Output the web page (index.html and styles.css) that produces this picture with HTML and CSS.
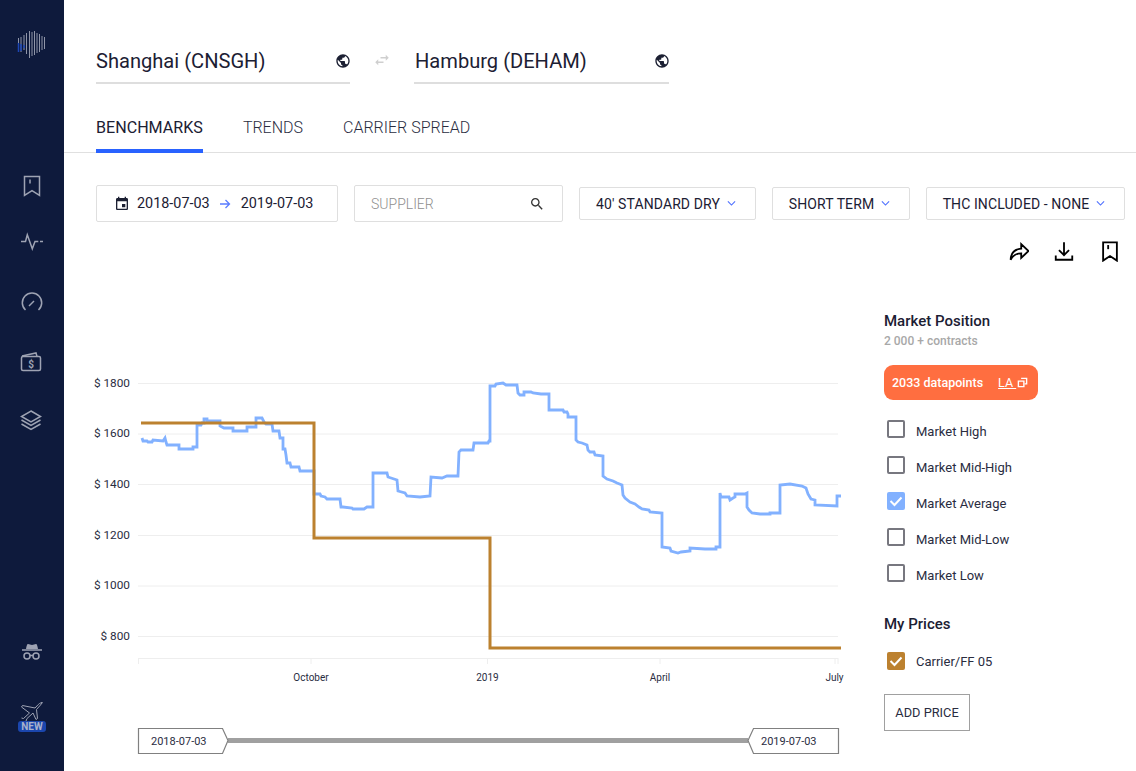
FILE: index.html
```html
<!DOCTYPE html>
<html lang="en">
<head>
<meta charset="utf-8">
<title>Benchmarks</title>
<link rel="stylesheet" href="styles.css">
</head>
<body>
<div class="app">
  <aside class="sidebar">
    <svg class="logo" viewBox="17 30 30 30" width="30" height="30">
      <path class="logo-bars" d="M18.500 38v14M21 37v15M24 35v15M26.500 33v21M29.500 31v27M32 32v24M34.500 31v24M37 33v20M39.500 34v18M42 36v14M44.500 37v12"/>
      <path class="logo-blue" d="M18.500 43v9M21 44v7M24 45v3"/>
    </svg>
    <nav class="nav-main">
      <svg class="nav-icon" viewBox="0 0 32 32"><path d="M8.500 6.500h15v19l-7.500-4.800-7.500 4.800z"/><path d="M14 9.500v4"/></svg>
      <svg class="nav-icon" viewBox="0 0 32 32"><path d="M5 12.500h4.500l1.800-6.700 5 14 2.700-7.300h3.300"/><path d="M24 12.500h3"/></svg>
      <svg class="nav-icon" viewBox="0 0 32 32"><path d="M9.500 23a9.700 9.700 0 1 1 13 0"/><path d="M13 19l5-5"/></svg>
      <svg class="nav-icon" viewBox="0 0 32 32"><rect x="5.500" y="10.500" width="19" height="14" rx="1.500"/><path d="M6 10l14-3 1 3.500"/><text x="15" y="22" class="wallet-sign">$</text></svg>
      <svg class="nav-icon" viewBox="0 0 32 32"><path d="M15 7l9.500 5.500-9.500 5.500-9.500-5.500z"/><path d="M5.500 16l9.500 5.500 9.500-5.500"/><path d="M5.500 20l9.500 5.500 9.500-5.500"/></svg>
    </nav>
    <div class="nav-bottom">
      <svg class="nav-icon" viewBox="0 0 32 32"><path class="solid" d="M10 10c.5-3 1-5 2-5l4 1 4-1c1 0 1.500 2 2 5z"/><path d="M6 11h20"/><circle cx="11" cy="17" r="3"/><circle cx="20" cy="17" r="3"/><path d="M14 16.500h3"/></svg>
      <div class="new-wrap">
        <svg class="nav-icon plane" viewBox="0 0 32 24"><path d="M26.800 .8c-1-.5-3 .2-4.500 1.700L19 6 6.500 3.500 5.500 5l8 6-6 5.500-2-.5M10 19l1-2.500 6-5.500 3 6.500 1.500-1-1-9 4-4.500c1.200-1.400 1.500-2.500.8-3.700"/></svg>
        <span class="new-badge">NEW</span>
      </div>
    </div>
  </aside>

  <main class="main">
    <div class="routes">
      <div class="port port-a">
        <span class="port-name">Shanghai (CNSGH)</span>
        <svg class="globe" viewBox="0 0 24 24"><path d="M12 2C6.480 2 2 6.480 2 12s4.480 10 10 10 10-4.480 10-10S17.520 2 12 2zm-1 17.930c-3.950-.49-7-3.850-7-7.930 0-.62.080-1.210.210-1.790L9 15v1c0 1.100.9 2 2 2v1.930zm6.900-2.540c-.26-.81-1-1.390-1.900-1.390h-1v-3c0-.55-.45-1-1-1H8v-2h2c.55 0 1-.45 1-1V7h2c1.100 0 2-.9 2-2v-.41c2.930 1.190 5 4.060 5 7.410 0 2.080-.8 3.970-2.100 5.390z"/></svg>
      </div>
      <svg class="swap" viewBox="0 0 24 24"><path d="M6.990 11L3 15l3.990 4v-3H14v-2H6.990v-3zM21 9l-3.990-4v3H10v2h7.010v3L21 9z"/></svg>
      <div class="port port-b">
        <span class="port-name">Hamburg (DEHAM)</span>
        <svg class="globe" viewBox="0 0 24 24"><path d="M12 2C6.480 2 2 6.480 2 12s4.480 10 10 10 10-4.480 10-10S17.520 2 12 2zm-1 17.930c-3.950-.49-7-3.850-7-7.930 0-.62.080-1.210.210-1.790L9 15v1c0 1.100.9 2 2 2v1.930zm6.900-2.540c-.26-.81-1-1.390-1.900-1.390h-1v-3c0-.55-.45-1-1-1H8v-2h2c.55 0 1-.45 1-1V7h2c1.100 0 2-.9 2-2v-.41c2.930 1.190 5 4.060 5 7.410 0 2.080-.8 3.970-2.100 5.390z"/></svg>
      </div>
    </div>

    <div class="tabs">
      <span class="tab tab-active">BENCHMARKS</span>
      <span class="tab">TRENDS</span>
      <span class="tab">CARRIER SPREAD</span>
    </div>

    <div class="filters">
      <div class="box box-date">
        <svg class="cal" viewBox="0 0 24 24"><path d="M17 12h-5v5h5v-5zM16 1v2H8V1H6v2H5c-1.110 0-1.990.9-1.990 2L3 19c0 1.100.89 2 2 2h14c1.100 0 2-.9 2-2V5c0-1.100-.9-2-2-2h-1V1h-2zm3 18H5V8h14v11z"/></svg>
        <span>2018-07-03</span>
        <svg class="arrow" viewBox="0 0 12 12"><path d="M1 6h9.500M6.500 2l4 4-4 4"/></svg>
        <span>2019-07-03</span>
      </div>
      <div class="box box-supplier">
        <span class="placeholder">SUPPLIER</span>
        <svg class="search" viewBox="0 0 24 24"><path d="M15.500 14h-.79l-.28-.27C15.410 12.590 16 11.110 16 9.500 16 5.910 13.090 3 9.500 3S3 5.910 3 9.500 5.910 16 9.500 16c1.610 0 3.090-.59 4.230-1.570l.27.28v.79l5 4.990L20.490 19l-4.990-5zm-6 0C7.010 14 5 11.990 5 9.500S7.010 5 9.500 5 14 7.010 14 9.500 11.990 14 9.500 14z"/></svg>
      </div>
      <div class="box box-select select-container">
        <span>40' STANDARD DRY</span>
        <svg class="chev" viewBox="0 0 8 6"><path d="M.8 1.200L4 4.400l3.200-3.200"/></svg>
      </div>
      <div class="box box-select select-term">
        <span>SHORT TERM</span>
        <svg class="chev" viewBox="0 0 8 6"><path d="M.8 1.200L4 4.400l3.200-3.200"/></svg>
      </div>
      <div class="box box-select select-thc">
        <span>THC INCLUDED - NONE</span>
        <svg class="chev" viewBox="0 0 8 6"><path d="M.8 1.200L4 4.400l3.200-3.200"/></svg>
      </div>
    </div>

    <div class="actions">
      <svg class="action" viewBox="-1 0 24 24"><path d="M3 21.500c.3-7 4.500-11.500 11.500-12V4.500l8 7.500-8 7.500v-5c-5 0-8.500 1.500-11.500 7z"/></svg>
      <svg class="action" viewBox="0 0 24 24"><path d="M12 2.500v14M6.500 11l5.500 5.500 5.500-5.500"/><path d="M3 17v4.500h18V17"/></svg>
      <svg class="action" viewBox="0 0 24 24"><path d="M4.500 2.500h15v20l-7.500-5-7.500 5z"/><path d="M10 5.500v4.500"/></svg>
    </div>

    <div class="content">
      <svg class="chart" viewBox="64 280 800 491" width="800" height="491">
        <g class="grid">
          <path d="M138 383.500h700M138 434h700M138 484.500h700M138 535.500h700M138 586h700M138 636.500h700"/>
          <path d="M138 658.500h700M138.500 658v6M311 658v6M487.500 658v6M660 658v6M835 658v6M838 658v6"/>
        </g>
        <g class="y-labels">
          <text x="130" y="387">$ 1800</text>
          <text x="130" y="437">$ 1600</text>
          <text x="130" y="488">$ 1400</text>
          <text x="130" y="539">$ 1200</text>
          <text x="130" y="589">$ 1000</text>
          <text x="130" y="640">$ 800</text>
        </g>
        <g class="x-labels">
          <text x="311" y="681">October</text>
          <text x="487.500" y="681">2019</text>
          <text x="660" y="681">April</text>
          <text x="834.500" y="681">July</text>
        </g>
        <polyline class="line-blue" points="142,438 143,441 147,441 148,442 152,442 153,440 163,441 165,438 166,442 167,445 179,445 179,449 193,449 193,447 197,447 197,425 201,425 202,423 204,423 204,419 207,419 207,421 220,421 220,426 222,427 224,428 233,428 233,431 247,431 247,427 256,427 256,418 262,418 264,422 266,424 272,424 273,431 279,431 280,438 283,438 283,449 285,449 286,455 287,463 290,463 291,467 299,467 300,471 314,471 314,494 320,494 321,496 325,497 327,499 340,499 341,507 343,507 352,508 353,509 364,509 367,507 373,507 373,473 387,473 388,477 397,480 398,491 405,493 407,496 420,497 430,496 431,477 442,478 447,476 458,476 459,452 461,450 473,450 474,443 488,443 489,441 490,441 490,386 495,386 496,384 503,383 506,385 517,385 518,393 520,395 524,395 524,392 531,392 533,393 541,394 549,394 549,410 563,410 564,412 567,412 568,414 568,417 576,417 576,440 578,442 582,443 587,445 588,450 590,452 594,452 595,455 603,456 603,476 607,479 613,481 617,483 622,485 623,495 625,498 630,502 635,504 639,507 642,509 649,510 650,512 662,513 662,547 670,548 671,551 678,553 681,552 690,551 690,548 705,549 716,549 716,547 720,547 720,493 721,497 729,497 730,500 733,498 735,497 735,494 745,494 747,493 747,507 749,510 752,513 760,514 770,514 770,513 780,513 780,485 790,484 802,486 806,488 808,494 811,499 815,500 815,505 837,506 837,496 841,496"/>
        <polyline class="line-gold" points="141,423 314,423 314,538 490,538 490,648 841,648"/>
        <rect class="range-bar" x="228" y="738" width="520" height="5"/>
        <polygon class="range-handle" points="138.500,728.500 222.500,728.500 228,740.500 222.500,753.500 138.500,753.500"/>
        <polygon class="range-handle" points="838.500,728.500 753.500,728.500 748,740.500 753.500,753.500 838.500,753.500"/>
        <text class="range-text" x="151" y="745">2018-07-03</text>
        <text class="range-text" x="761" y="745">2019-07-03</text>
      </svg>

      <section class="panel">
        <h2 class="panel-title">Market Position</h2>
        <p class="panel-sub">2 000 + contracts</p>
        <div class="pill">
          <span>2033 datapoints</span>
          <span class="pill-link">LA </span>
          <svg class="pill-icon" viewBox="0 0 12 12"><path d="M4.500 1.500h6v6h-2M1.500 4.500h6v6h-6z"/></svg>
        </div>
        <ul class="checks market">
          <li class="check"><span class="checkbox"></span>Market High</li>
          <li class="check"><span class="checkbox"></span>Market Mid-High</li>
          <li class="check"><span class="checkbox checkbox-blue"><svg viewBox="0 0 18 18"><path d="M3.500 9l4 4 7-7.500"/></svg></span>Market Average</li>
          <li class="check"><span class="checkbox"></span>Market Mid-Low</li>
          <li class="check"><span class="checkbox"></span>Market Low</li>
        </ul>
        <h2 class="panel-title prices-title">My Prices</h2>
        <ul class="checks">
          <li class="check"><span class="checkbox checkbox-gold"><svg viewBox="0 0 18 18"><path d="M3.500 9l4 4 7-7.500"/></svg></span>Carrier/FF 05</li>
        </ul>
        <button class="add-price">ADD PRICE</button>
      </section>
    </div>
  </main>
</div>
</body>
</html>
```
FILE: styles.css
```css
* { box-sizing: border-box; }
html, body { margin: 0; height: 100%; }
body { font-family: Roboto, "Liberation Sans", sans-serif; color: #1c2033; background: #fff; overflow: hidden; }
.app { display: flex; height: 771px; }

.sidebar { width: 64px; flex: none; background: #0e1a3c; display: flex; flex-direction: column; align-items: center; padding-top: 30px; }
.logo { display: block; align-self: flex-start; margin-left: 17px; width: 30px; height: 30px; }
.logo-bars { fill: none; stroke: #8f95a8; stroke-width: 1; }
.logo-blue { fill: none; stroke: #1c46b4; stroke-width: 1.500; }
.nav-main { display: flex; flex-direction: column; gap: 26.500px; margin-top: 110px; }
.nav-icon { display: block; width: 32px; height: 32px; fill: none; stroke: #9ea3b3; stroke-width: 1.500; }
.nav-icon .solid { fill: #9ea3b3; stroke: none; }
.wallet-sign { font-size: 10px; font-weight: 700; fill: #9ea3b3; stroke: none; text-anchor: middle; }
.nav-bottom { margin-top: auto; padding-bottom: 37px; display: flex; flex-direction: column; align-items: center; gap: 31px; }
.new-wrap { position: relative; width: 32px; height: 32px; }
.plane { height: 24px; stroke-width: 1; }
.new-badge { position: absolute; left: 2px; top: 19px; width: 28px; height: 11px; border-radius: 3px; background: #1b46ad; color: #a8b2cc; font-size: 10px; font-weight: 700; line-height: 11px; text-align: center; }

.main { flex: 1; min-width: 0; }
.routes { display: flex; align-items: flex-start; padding: 40px 0 0 32px; }
.port { height: 44px; border-bottom: 2px solid #dedede; display: flex; align-items: center; justify-content: space-between; }
.port-a { width: 254px; }
.port-b { width: 255px; padding-left: 1px; }
.port-name { font-size: 20.100px; line-height: 42px; color: #1c2033; }
.globe { width: 16px; height: 16px; margin-right: -1px; fill: #1c2033; }
.swap { width: 18px; height: 18px; margin: 11px 23px 0 23px; fill: #cfcfcf; }

.tabs { display: flex; gap: 40px; padding-left: 32px; margin-top: 24px; border-bottom: 1px solid #e0e0e0; height: 45px; }
.tab { font-size: 16px; font-weight: 300; line-height: 40px; color: #2a2d3f; }
.tab-active { font-size: 16.100px; font-weight: 400; color: #1c2033; border-bottom: 4px solid #2962ff; height: 45px; }

.filters { display: flex; gap: 16px; align-items: center; padding-left: 32px; margin-top: 32px; height: 37px; white-space: nowrap; }
.box { display: flex; align-items: center; border: 1px solid #dfdfdf; border-radius: 2px; font-size: 14.400px; color: #1c2033; }
.box-date { width: 242px; height: 37px; padding-left: 17px; }
.cal { width: 16px; height: 16px; margin-right: 7px; fill: #1c2033; }
.arrow { width: 12px; height: 12px; margin: 0 9.500px; fill: none; stroke: #5a7cff; stroke-width: 1.300; }
.box-supplier { width: 209px; height: 37px; padding: 0 17px 0 16px; justify-content: space-between; font-size: 14px; }
.placeholder { color: #8f8f8f; font-weight: 300; }
.search { width: 16px; height: 16px; fill: #333; }
.box-select { height: 33px; padding-right: 3px; justify-content: center; font-size: 14px; letter-spacing: .1px; }
.select-container { width: 177px; }
.select-term { width: 138px; }
.select-thc { width: 199px; }
.chev { width: 9px; height: 7px; margin-left: 7px; fill: none; stroke: #4d6fff; stroke-width: 1; }

.actions { display: flex; justify-content: flex-end; gap: 24px; padding-right: 15px; margin-top: 18px; height: 25px; }
.action { width: 22px; height: 22px; fill: none; stroke: #000; stroke-width: 2; }

.content { display: flex; gap: 20px; margin-top: 15px; }
.chart { display: block; flex: none; }
.grid path { fill: none; stroke: #eeeeee; stroke-width: 1; }
.y-labels text { font-size: 11.800px; text-anchor: end; fill: #2a2d3f; }
.x-labels text { font-size: 10px; text-anchor: middle; fill: #2a2d3f; }
.line-blue { fill: none; stroke: #82b1ff; stroke-width: 2.800; }
.line-gold { fill: none; stroke: #bc812f; stroke-width: 3; }
.range-bar { fill: #a0a0a0; }
.range-handle { fill: #fff; stroke: #808080; stroke-width: 1.200; }
.range-text { font-size: 11px; fill: #2a2d3f; }

.panel { width: 240px; padding-top: 32px; }
.panel-title { margin: 0; font-size: 15px; font-weight: 500; line-height: 18px; color: #1c2033; }
.panel-sub { margin: 3px 0 0; font-size: 12px; font-weight: 500; line-height: 16px; color: #a8a8a8; }
.pill { display: flex; align-items: center; width: 154px; height: 35px; margin-top: 16px; padding-left: 8px; border-radius: 9px; background: #ff6e40; color: #fff; font-size: 12.500px; font-weight: 500; }
.pill-link { margin-left: 15px; text-decoration: underline; font-weight: 400; white-space: pre; }
.pill-icon { width: 11px; height: 11px; margin-left: 1px; fill: none; stroke: #fff; stroke-width: 1.500; }
.checks { list-style: none; margin: 0; padding: 0; }
.check { display: flex; align-items: center; height: 36px; font-size: 13px; color: #2a2d3f; }
.market { margin-top: 13px; }
.checkbox { display: block; flex: none; width: 18px; height: 18px; margin: 0 11px 0 3px; border: 2px solid #77777f; border-radius: 2px; }
.market .checkbox { margin-bottom: 4px; }
.checkbox svg { display: block; width: 18px; height: 18px; fill: none; stroke: #fff; stroke-width: 2; }
.checkbox-blue { background: #82b1ff; border: 0; }
.checkbox-gold { background: #bc812f; border: 0; }
.prices-title { margin-top: 22px; }
.prices-title + .checks { margin-top: 10px; }
.add-price { display: block; width: 86px; height: 37px; margin-top: 15px; padding: 0; border: 1px solid #a0a0a0; border-radius: 0; background: #fff; font: 400 12.800px Roboto, "Liberation Sans", sans-serif; color: #2a2d3f; }
```
